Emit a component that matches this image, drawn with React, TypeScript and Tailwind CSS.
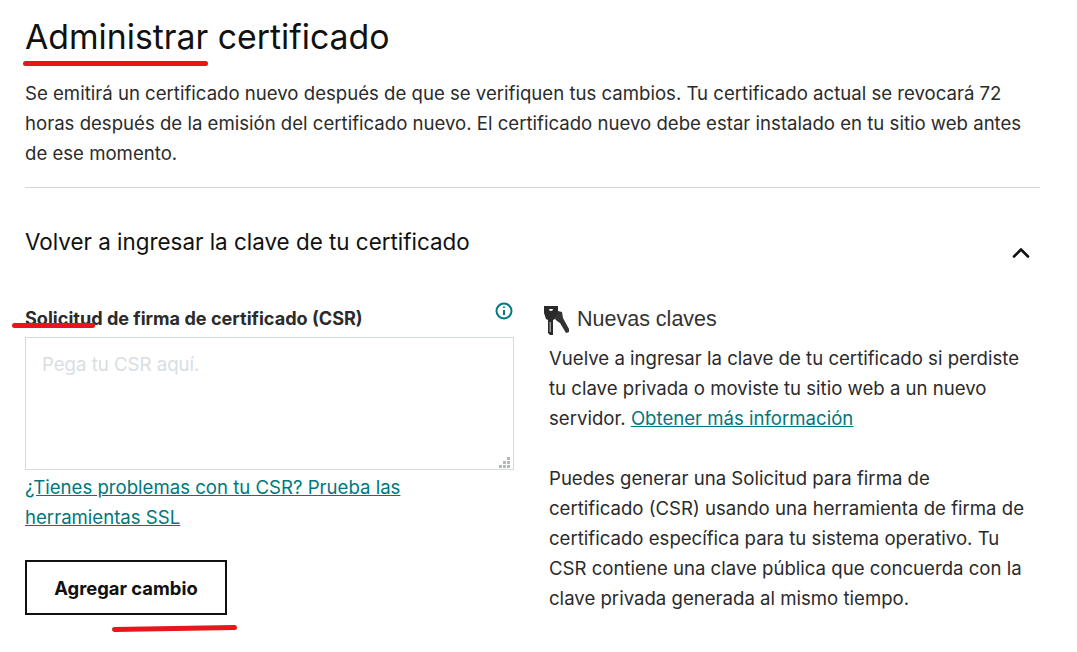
import { ChevronUp } from "lucide-react";

const font = "font-['Inter','Liberation_Sans',sans-serif]";

function RedMark({ className }: { className: string }) {
  return <span className={`absolute h-[5px] rounded-full bg-[#e8151c] ${className}`} />;
}

function KeysIcon() {
  return (
    <svg width="28" height="32" viewBox="0 0 28 32" className="ml-[-1px] shrink-0">
      <path fill="#333" d="M15 7l4 1 1 6 6 11v3l-3 1-6-10-3-2-2-2z" />
      <path
        fill="#2a2a2a"
        fillRule="evenodd"
        d="M1 2h14v7l-3 6-2 1v15H7l-2-2V16l-2-1-2-6zM6 5a2 2 0 0 0 4 0z"
      />
      <path fill="#9a9a9a" d="M6.500 18h1.500v10H6.500z" />
    </svg>
  );
}

function ResizeGrip() {
  return (
    <svg width="12" height="12" viewBox="0 0 12 12" className="absolute bottom-[1px] right-[3px]" fill="#b4b8bc">
      <rect x="8" y="0" width="3" height="3" />
      <rect x="4" y="4" width="3" height="3" />
      <rect x="8" y="4" width="3" height="3" />
      <rect x="0" y="8" width="3" height="3" />
      <rect x="4" y="8" width="3" height="3" />
      <rect x="8" y="8" width="3" height="3" />
    </svg>
  );
}

export default function App() {
  return (
    <div className={`relative h-[652px] w-[1077px] overflow-hidden bg-white pl-[25px] pr-[37px] pt-[15px] text-[18.6px] leading-[30px] text-[#111] ${font}`}>
      {/* Title */}
      <h1 className="text-[33.8px] leading-[44px]">Administrar certificado</h1>
      <p className="mt-[19px] text-[#2b2b2b]">
        Se emitirá un certificado nuevo después de que se verifiquen tus cambios. Tu certificado actual se revocará 72
        <br />
        horas después de la emisión del certificado nuevo. El certificado nuevo debe estar instalado en tu sitio web antes
        <br />
        de ese momento.
      </p>
      <hr className="mt-[19px] border-[#d6d6d6]" />

      {/* Accordion header */}
      <div className="mt-[37px] flex items-start justify-between">
        <h2 className="text-[22.4px] leading-[34px]">Volver a ingresar la clave de tu certificado</h2>
        <ChevronUp size={28} strokeWidth={2.25} className="mr-[5px] mt-[14px] text-[#111]" />
      </div>

      {/* Form + help */}
      <div className="mt-[31px] flex gap-[30px]">
        <div className="w-[489px] shrink-0">
          <div className="flex items-start justify-between">
            <label className="mt-[5px] text-[18.1px] font-bold leading-[30px] text-[#2b2b2b]">Solicitud de firma de certificado (CSR)</label>
            <svg width="20" height="20" viewBox="0 0 20 20" className="mt-[3px]" fill="none" stroke="#007a7f">
              <circle cx="10" cy="10" r="7.500" strokeWidth="2" />
              <path d="M10 9v5" strokeWidth="2" />
              <circle cx="10" cy="6.200" r="0.600" strokeWidth="1" />
            </svg>
          </div>
          <div className="relative mt-[4px]">
            <textarea
              placeholder="Pega tu CSR aquí."
              className="block h-[133px] w-full resize-none border border-[#d4dbe0] px-4 py-[11px] placeholder:text-[#d8dee3]"
            />
            <ResizeGrip />
          </div>
          <a href="#" className="mt-[2px] block underline text-[#00777c]">
            ¿Tienes problemas con tu CSR? Prueba las
            <br />
            herramientas SSL
          </a>
          <button className="mt-[28px] h-[55px] w-[202px] border-2 border-[#111] text-[18.4px] font-bold text-[#111]">Agregar cambio</button>
        </div>

        <div className="mt-[6px] flex-1">
          <div className="flex items-center gap-[6px]">
            <KeysIcon />
            <span className="mt-[-2px] font-['Liberation_Sans',sans-serif] text-[21.5px] leading-[30px] text-[#333]">Nuevas claves</span>
          </div>
          <div className="ml-[5px] mt-[7px] text-[#2b2b2b]">
            <p>
              Vuelve a ingresar la clave de tu certificado si perdiste
              <br />
              tu clave privada o moviste tu sitio web a un nuevo
              <br />
              servidor.{" "}
              <a href="#" className="underline text-[#00777c]">
                Obtener más información
              </a>
            </p>
            <p className="mt-[30px]">
              Puedes generar una Solicitud para firma de
              <br />
              certificado (CSR) usando una herramienta de firma de
              <br />
              certificado específica para tu sistema operativo. Tu
              <br />
              CSR contiene una clave pública que concuerda con la
              <br />
              clave privada generada al mismo tiempo.
            </p>
          </div>
        </div>
      </div>

      {/* Red marker strokes drawn over the screenshot */}
      <RedMark className="left-[23px] top-[61px] w-[185px]" />
      <RedMark className="left-[12px] top-[323px] w-[83px]" />
      <RedMark className="left-[112px] top-[626px] w-[125px] -rotate-1" />
    </div>
  );
}
